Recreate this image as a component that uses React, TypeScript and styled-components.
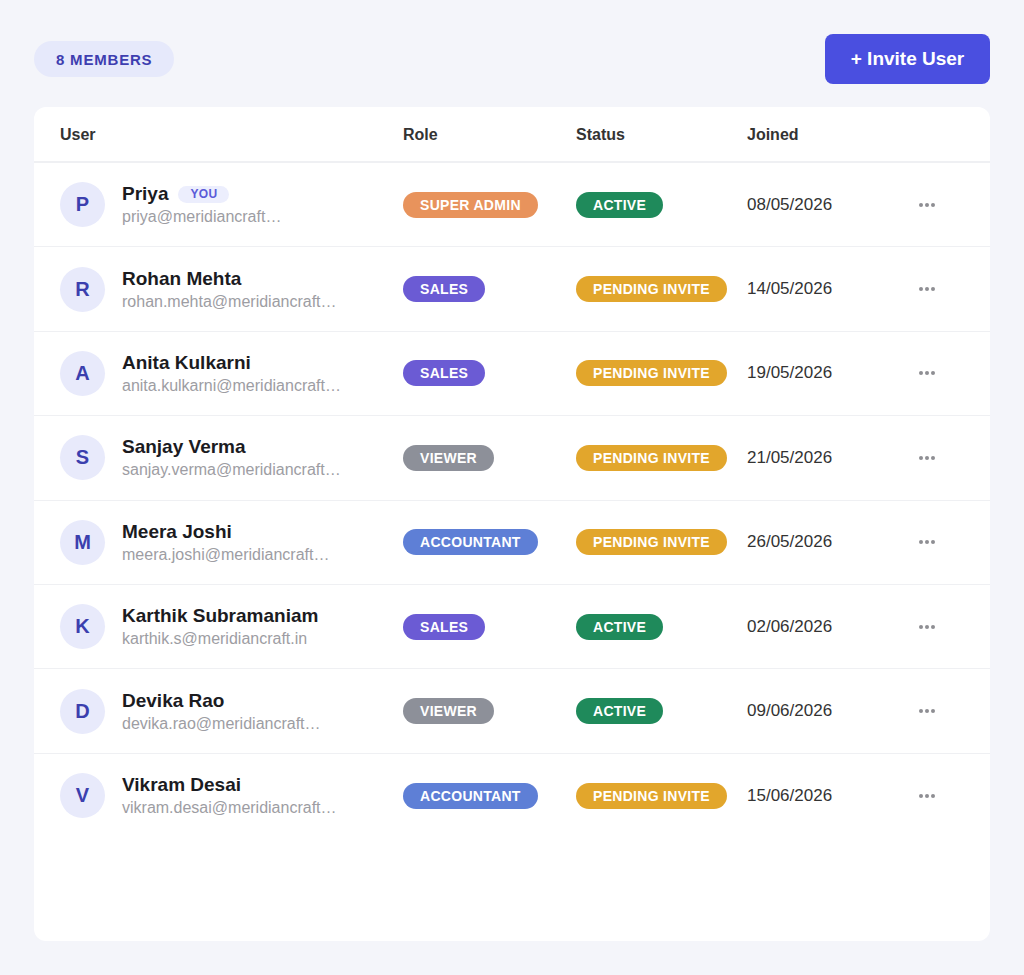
import React from 'react';
import styled, { createGlobalStyle } from 'styled-components';

type Role = 'SUPER ADMIN' | 'SALES' | 'VIEWER' | 'ACCOUNTANT';
type Status = 'ACTIVE' | 'PENDING INVITE';

interface Member {
  id: number;
  name: string;
  email: string;
  role: Role;
  status: Status;
  joined: string;
  isYou?: boolean;
}

const members: Member[] = [
  { id: 1, name: 'Priya', email: 'priya@meridiancraft…', role: 'SUPER ADMIN', status: 'ACTIVE', joined: '08/05/2026', isYou: true },
  { id: 2, name: 'Rohan Mehta', email: 'rohan.mehta@meridiancraft…', role: 'SALES', status: 'PENDING INVITE', joined: '14/05/2026' },
  { id: 3, name: 'Anita Kulkarni', email: 'anita.kulkarni@meridiancraft…', role: 'SALES', status: 'PENDING INVITE', joined: '19/05/2026' },
  { id: 4, name: 'Sanjay Verma', email: 'sanjay.verma@meridiancraft…', role: 'VIEWER', status: 'PENDING INVITE', joined: '21/05/2026' },
  { id: 5, name: 'Meera Joshi', email: 'meera.joshi@meridiancraft…', role: 'ACCOUNTANT', status: 'PENDING INVITE', joined: '26/05/2026' },
  { id: 6, name: 'Karthik Subramaniam', email: 'karthik.s@meridiancraft.in', role: 'SALES', status: 'ACTIVE', joined: '02/06/2026' },
  { id: 7, name: 'Devika Rao', email: 'devika.rao@meridiancraft…', role: 'VIEWER', status: 'ACTIVE', joined: '09/06/2026' },
  { id: 8, name: 'Vikram Desai', email: 'vikram.desai@meridiancraft…', role: 'ACCOUNTANT', status: 'PENDING INVITE', joined: '15/06/2026' },
];

const roleColors: Record<Role, string> = {
  'SUPER ADMIN': '#e8935c',
  SALES: '#6b5bd4',
  VIEWER: '#8d9099',
  ACCOUNTANT: '#5e7fd6',
};

const statusColors: Record<Status, string> = {
  ACTIVE: '#1f8a5b',
  'PENDING INVITE': '#e2a62c',
};

function App() {
  return (
    <>
      <GlobalStyle />
      <Page>
        <TopBar>
          <CountPill>{members.length} MEMBERS</CountPill>
          <InviteButton type="button">+ Invite User</InviteButton>
        </TopBar>
        <Card>
          <HeaderRow>
            <HeaderCell>User</HeaderCell>
            <HeaderCell>Role</HeaderCell>
            <HeaderCell>Status</HeaderCell>
            <HeaderCell>Joined</HeaderCell>
            <HeaderCell />
          </HeaderRow>
          {members.map((m) => (
            <Row key={m.id}>
              <UserCell>
                <Avatar>{m.name[0]}</Avatar>
                <UserInfo>
                  <NameLine>
                    <Name>{m.name}</Name>
                    {m.isYou && <YouTag>YOU</YouTag>}
                  </NameLine>
                  <Email>{m.email}</Email>
                </UserInfo>
              </UserCell>
              <div>
                <Badge $color={roleColors[m.role]}>{m.role}</Badge>
              </div>
              <div>
                <Badge $color={statusColors[m.status]}>{m.status}</Badge>
              </div>
              <DateText>{m.joined}</DateText>
              <MoreButton type="button" aria-label="More actions">
                <Dot />
                <Dot />
                <Dot />
              </MoreButton>
            </Row>
          ))}
        </Card>
      </Page>
    </>
  );
}

export default App;

const GlobalStyle = createGlobalStyle`
  * {
    box-sizing: border-box;
  }
  body {
    margin: 0;
    background: #f4f5fa;
    font-family: "Liberation Sans", Arial, sans-serif;
    color: #222;
  }
`;

const Page = styled.main`
  min-height: 100vh;
  display: flex;
  flex-direction: column;
  padding: 34px;
`;

const TopBar = styled.div`
  display: flex;
  justify-content: space-between;
  align-items: center;
  margin-bottom: 23px;
`;

const CountPill = styled.span`
  display: inline-flex;
  align-items: center;
  height: 36px;
  padding: 0 22px;
  border-radius: 18px;
  background: #e6e9fb;
  color: #3e3eb0;
  font-size: 15px;
  font-weight: 700;
  letter-spacing: 0.8px;
`;

const InviteButton = styled.button`
  width: 165px;
  height: 50px;
  border: none;
  border-radius: 8px;
  background: #4a4fe0;
  color: #fff;
  font-family: inherit;
  font-size: 19px;
  font-weight: 700;
  cursor: pointer;
`;

const Card = styled.section`
  flex: 1;
  background: #fff;
  border-radius: 12px;
  overflow: hidden;
`;

const gridColumns = `
  display: grid;
  grid-template-columns: 343px 173px 171px 150px 1fr;
  align-items: center;
  padding: 0 26px;
`;

const HeaderRow = styled.div`
  ${gridColumns}
  height: 56px;
  padding-top: 1px;
  border-bottom: 2px solid #eff0f3;
`;

const HeaderCell = styled.div`
  font-size: 16px;
  font-weight: 700;
  color: #333;
`;

const Row = styled.div`
  ${gridColumns}
  height: 84.4px;
  border-bottom: 1px solid #eff0f3;
  &:last-child {
    border-bottom: none;
  }
`;

const UserCell = styled.div`
  display: flex;
  align-items: center;
  gap: 17px;
`;

const Avatar = styled.div`
  width: 45px;
  height: 45px;
  border-radius: 50%;
  background: #e8eafb;
  color: #3b3fae;
  display: flex;
  align-items: center;
  justify-content: center;
  font-size: 20px;
  font-weight: 700;
  flex-shrink: 0;
`;

const UserInfo = styled.div`
  display: flex;
  flex-direction: column;
  gap: 3px;
  min-width: 0;
`;

const NameLine = styled.div`
  display: flex;
  align-items: center;
  gap: 10px;
`;

const Name = styled.span`
  font-size: 19px;
  font-weight: 700;
  color: #1b1b1f;
`;

const YouTag = styled.span`
  display: inline-flex;
  align-items: center;
  height: 17px;
  padding: 0 12px;
  border-radius: 9px;
  background: #eceefd;
  color: #5a5ad8;
  font-size: 12px;
  font-weight: 700;
  letter-spacing: 0.3px;
`;

const Email = styled.span`
  font-size: 16px;
  color: #9d9da3;
  white-space: nowrap;
`;

const Badge = styled.span<{ $color: string }>`
  display: inline-flex;
  align-items: center;
  height: 26px;
  padding: 0 17px;
  border-radius: 13px;
  background: ${(p) => p.$color};
  color: #fff;
  font-size: 14px;
  font-weight: 700;
  letter-spacing: 0.3px;
  white-space: nowrap;
`;

const DateText = styled.span`
  font-size: 17px;
  color: #333;
`;

const MoreButton = styled.button`
  justify-self: start;
  margin-left: 22px;
  display: flex;
  gap: 2px;
  padding: 4px 0;
  border: none;
  background: none;
  cursor: pointer;
`;

const Dot = styled.span`
  width: 4px;
  height: 4px;
  border-radius: 50%;
  background: #8e8e93;
`;
